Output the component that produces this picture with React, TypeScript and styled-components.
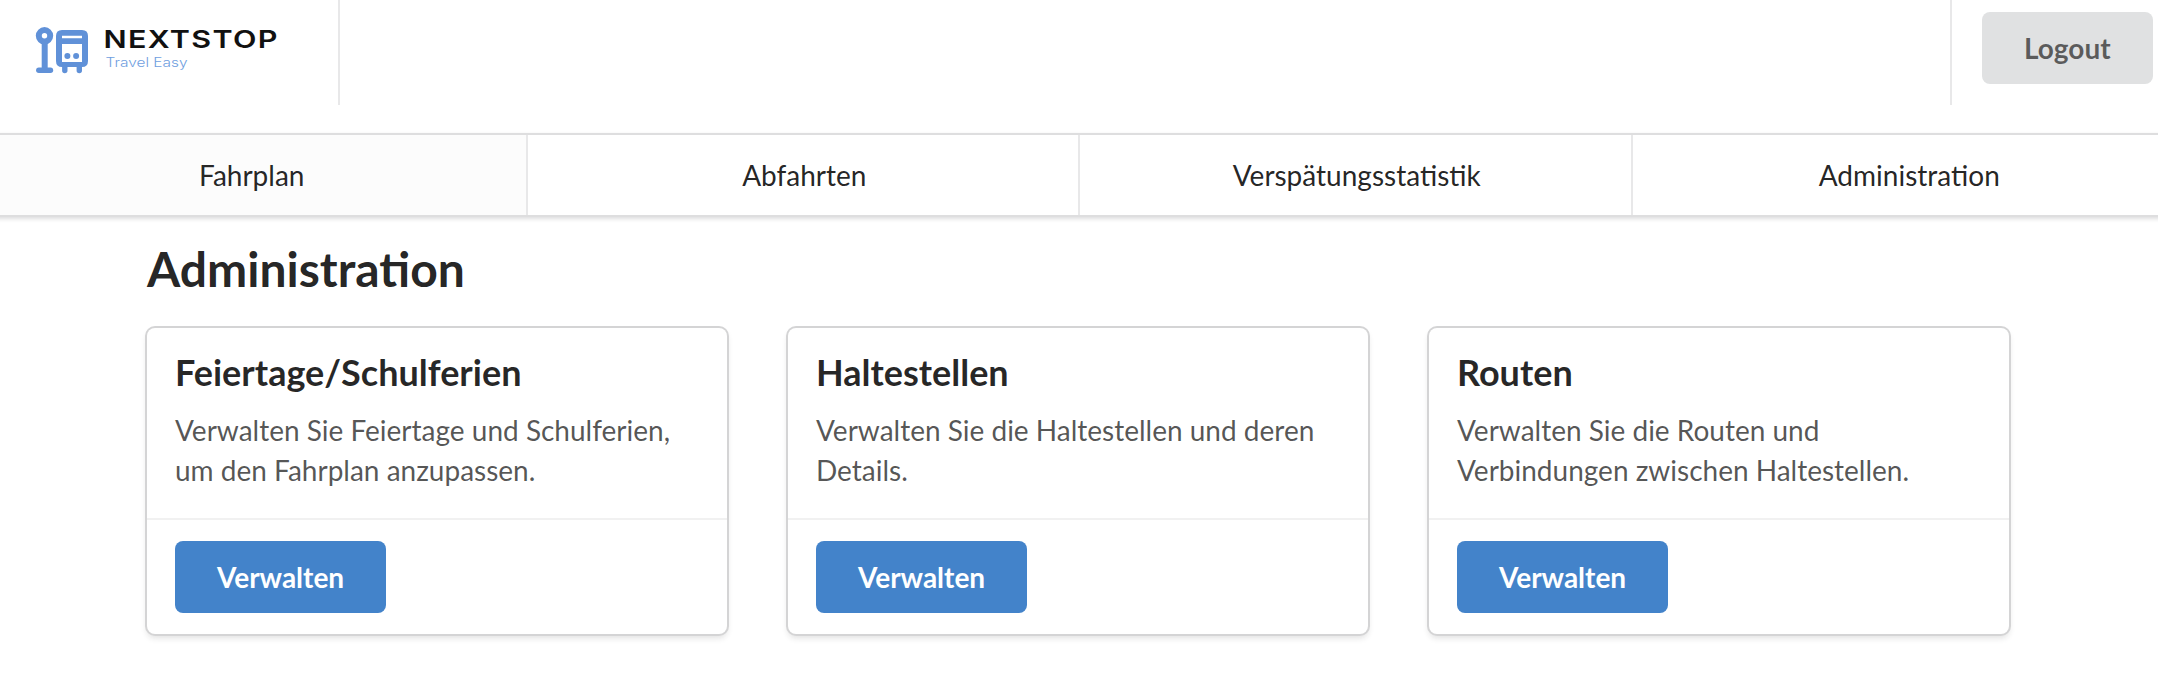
import React from "react";
import styled, { createGlobalStyle } from "styled-components";

const GlobalStyle = createGlobalStyle`
  * { box-sizing: border-box; }
  body {
    margin: 0;
    background: #fff;
    font-family: Lato, sans-serif;
    font-size: 28px;
    line-height: 40px;
    color: rgba(0, 0, 0, 0.87);
  }
`;

const Page = styled.div`
  min-height: 676px;
  overflow: hidden;
`;

const TopBar = styled.header`
  display: flex;
  align-items: flex-start;
  height: 133px;
`;

const LogoCell = styled.a`
  width: 340px;
  height: 105px;
  border-right: 2px solid #e8e8e9;
`;

const LogoutCell = styled.div`
  margin-left: auto;
  width: 208px;
  height: 105px;
  padding: 12px 0 0 30px;
  border-left: 2px solid #e8e8e9;
`;

const Button = styled.button<{ $primary?: boolean }>`
  display: block;
  height: 72px;
  padding: 0 42px;
  border: 0;
  border-radius: 8px;
  font: 700 28px/28px Lato, sans-serif;
  white-space: nowrap;
  color: ${(p) => (p.$primary ? "#fff" : "rgba(0, 0, 0, 0.6)")};
  background: ${(p) => (p.$primary ? "#4383ca" : "#e0e1e2")};
`;

const Nav = styled.nav`
  display: grid;
  grid-template-columns: repeat(4, 1fr);
  height: 84px;
  margin: 0 -27px 0 -25px;
  border: solid #dededf;
  border-width: 2px 0;
  box-shadow: 0 2px 4px rgba(34, 36, 38, 0.15);
`;

const NavItem = styled.a<{ $active?: boolean }>`
  display: flex;
  align-items: center;
  justify-content: center;
  padding-left: 3px;
  border-right: 2px solid #e8e8e9;
  background: ${(p) => (p.$active ? "#fcfcfc" : "#fff")};
`;

const Main = styled.main`
  padding: 21px 147px 0;
`;

const PageTitle = styled.h1`
  margin: 0 0 28px;
  font-size: 48px;
  line-height: 62px;
  font-weight: 700;
`;

const Cards = styled.div`
  display: grid;
  grid-template-columns: repeat(3, 580px);
  column-gap: 61px;
`;

const Card = styled.article`
  height: 306px;
  border-radius: 8px;
  box-shadow: 0 0 0 2px #d4d4d5, 0 4px 6px rgba(34, 36, 38, 0.14);
  background: #fff;
`;

const CardBody = styled.div`
  height: 190px;
  padding: 21px 28px 0;
`;

const CardTitle = styled.h2`
  margin: 0 0 15px;
  font-size: 36px;
  line-height: 46px;
  font-weight: 700;
  color: rgba(0, 0, 0, 0.85);
`;

const CardText = styled.p`
  margin: 0;
  color: rgba(0, 0, 0, 0.68);
`;

const CardFooter = styled.div`
  padding: 21px 28px;
  border-top: 2px solid #f1f1f1;
`;

const Logo = () => (
  <svg width="338" height="100" viewBox="0 0 338 100">
    <g fill="none" stroke="#6091d8" strokeWidth="6" strokeLinecap="round">
      <circle cx="44.5" cy="35.8" r="5.7" />
      <path d="M44.7 43V70" />
      <path d="M38.8 70.3H50.5" strokeWidth="5.4" />
      <path d="M64.8 65V70.5M79.3 65V70.5" strokeWidth="5.4" />
    </g>
    <path
      fill="#6091d8"
      fillRule="evenodd"
      d="M62 30H82Q88 30 88 36V61Q88 67 82 67H62Q56 67 56 61V36Q56 30 62 30ZM62 35.7V38.3H82V35.7ZM62 44V62H82V44Z"
    />
    <circle cx="67.4" cy="56" r="3" fill="#6091d8" />
    <circle cx="76.1" cy="56" r="3" fill="#6091d8" />
    <g transform="translate(103.6 48) scale(1.25 1)">
      <text
        fontFamily="Inter, sans-serif"
        fontSize="24.4"
        fontWeight="600"
        fill="#111"
        textLength="139"
      >
        NEXTSTOP
      </text>
    </g>
    <text
      x="105.5"
      y="67.3"
      fontFamily="Inter, sans-serif"
      fontSize="12.6"
      fontWeight="300"
      fill="#6f9ee0"
      textLength="82"
      lengthAdjust="spacingAndGlyphs"
    >
      Travel Easy
    </text>
  </svg>
);

const navItems = ["Fahrplan", "Abfahrten", "Verspätungsstatistik", "Administration"];

const cards = [
  {
    title: "Feiertage/Schulferien",
    text: "Verwalten Sie Feiertage und Schulferien, um den Fahrplan anzupassen.",
  },
  { title: "Haltestellen", text: "Verwalten Sie die Haltestellen und deren Details." },
  {
    title: "Routen",
    text: "Verwalten Sie die Routen und Verbindungen zwischen Haltestellen.",
  },
];

export default function App() {
  return (
    <Page>
      <GlobalStyle />
      <TopBar>
        <LogoCell>
          <Logo />
        </LogoCell>
        <LogoutCell>
          <Button>Logout</Button>
        </LogoutCell>
      </TopBar>
      <Nav>
        {navItems.map((item, i) => (
          <NavItem key={item} $active={i === 0}>
            {item}
          </NavItem>
        ))}
      </Nav>
      <Main>
        <PageTitle>Administration</PageTitle>
        <Cards>
          {cards.map((card) => (
            <Card key={card.title}>
              <CardBody>
                <CardTitle>{card.title}</CardTitle>
                <CardText>{card.text}</CardText>
              </CardBody>
              <CardFooter>
                <Button $primary>Verwalten</Button>
              </CardFooter>
            </Card>
          ))}
        </Cards>
      </Main>
    </Page>
  );
}
